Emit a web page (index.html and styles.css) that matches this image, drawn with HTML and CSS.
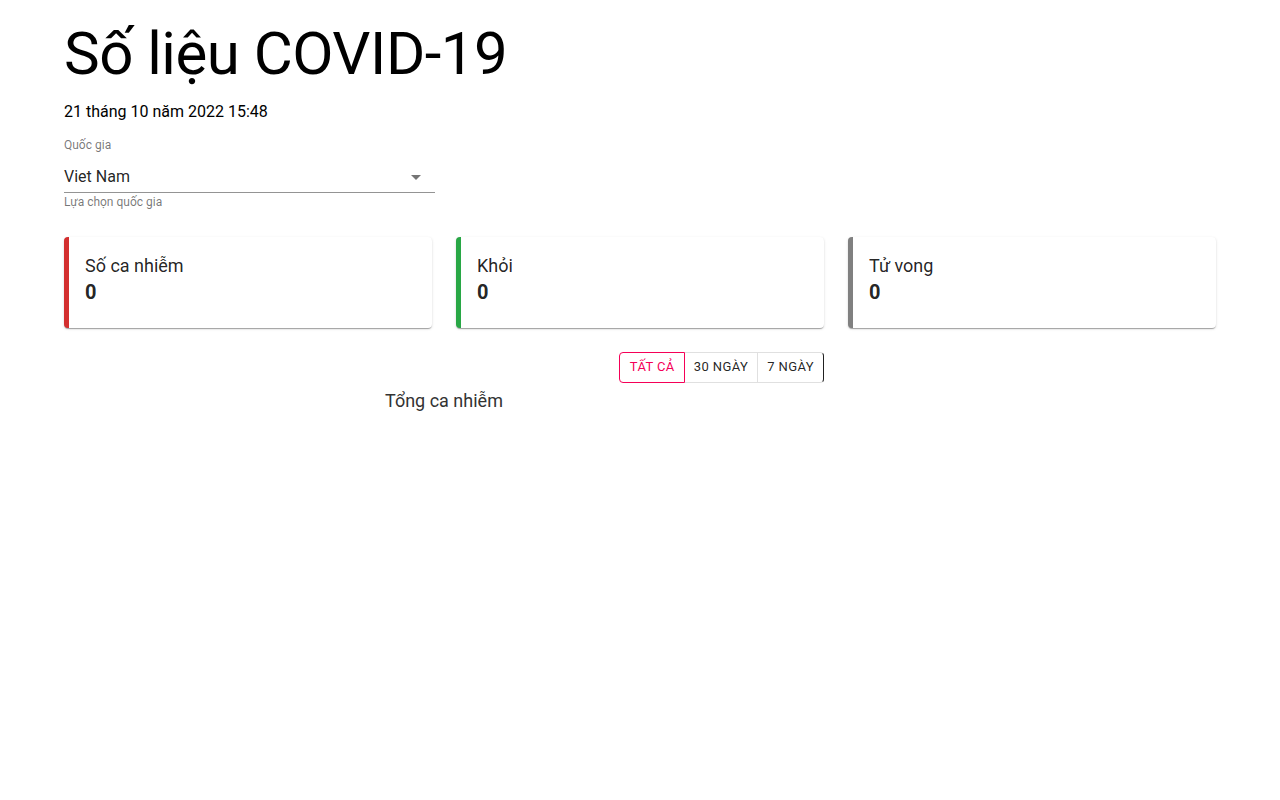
FILE: index.html
```html
<!DOCTYPE html>
<html lang="vi">
<head>
<meta charset="utf-8">
<title>Số liệu COVID-19</title>
<link rel="stylesheet" href="styles.css">
</head>
<body>
<main class="page">
  <h1 class="title">Số liệu COVID-19</h1>
  <p class="date">21 tháng 10 năm 2022 15:48</p>

  <div class="field">
    <label class="field-label">Quốc gia</label>
    <div class="select">
      <span class="select-value">Viet Nam</span>
      <svg class="select-arrow" width="24" height="24" viewBox="0 0 24 24"><path d="M7 10l5 5 5-5z" fill="rgba(0,0,0,0.54)"/></svg>
    </div>
    <div class="field-helper">Lựa chọn quốc gia</div>
  </div>

  <section class="cards">
    <div class="card card-red">
      <div class="card-title">Số ca nhiễm</div>
      <div class="card-value">0</div>
    </div>
    <div class="card card-green">
      <div class="card-title">Khỏi</div>
      <div class="card-value">0</div>
    </div>
    <div class="card card-gray">
      <div class="card-title">Tử vong</div>
      <div class="card-value">0</div>
    </div>
  </section>

  <section class="chart">
    <div class="toggle-row">
      <div class="toggle-group">
        <button class="toggle selected">Tất cả</button>
        <button class="toggle">30 ngày</button>
        <button class="toggle last">7 ngày</button>
      </div>
    </div>
    <div class="chart-title">Tổng ca nhiễm</div>
  </section>
</main>
</body>
</html>
```

FILE: styles.css
```css
* { box-sizing: border-box; }
html, body { margin: 0; padding: 0; background: #fff; }
body {
  font-family: Roboto, "Noto Sans", "Liberation Sans", sans-serif;
  color: rgba(0,0,0,0.87);
}
.page {
  width: 1152px;
  margin: 0 64px;
  padding-top: 18px;
}
.title {
  margin: 0;
  font-size: 60px;
  line-height: 72px;
  font-weight: 400;
  letter-spacing: -0.5px;
  color: #000;
}
.date {
  margin: 10px 0 0;
  font-size: 16px;
  line-height: 24px;
  color: #000;
}
.field {
  width: 371px;
  margin-top: 13px;
}
.field-label {
  display: block;
  font-size: 12px;
  line-height: 16px;
  color: rgba(0,0,0,0.54);
}
.select {
  display: flex;
  align-items: center;
  justify-content: space-between;
  margin-top: 12px;
  height: 28px;
  padding-bottom: 4px;
  border-bottom: 1px solid rgba(0,0,0,0.42);
}
.select-value {
  font-size: 16px;
  line-height: 23px;
  color: rgba(0,0,0,0.87);
}
.select-arrow { margin-right: 7px; }
.field-helper {
  margin-top: 1px;
  font-size: 12px;
  line-height: 16px;
  color: rgba(0,0,0,0.54);
}
.cards {
  display: grid;
  grid-template-columns: repeat(3, 1fr);
  gap: 24px;
  margin-top: 27px;
}
.card {
  background: #fff;
  border-radius: 4px;
  border-left: 5px solid #d32f2f;
  box-shadow: 0 2px 1px -1px rgba(0,0,0,0.2), 0 1px 1px 0 rgba(0,0,0,0.14), 0 1px 3px 0 rgba(0,0,0,0.12);
  padding: 16px 16px 23px;
}
.card-red { border-left-color: #d32f2f; }
.card-green { border-left-color: #28a745; }
.card-gray { border-left-color: #808080; }
.card-title {
  font-size: 18px;
  line-height: 26px;
}
.card-value {
  font-size: 20px;
  line-height: 26px;
  font-weight: 700;
}
.chart {
  width: 760px;
  margin-top: 24px;
}
.toggle-row {
  display: flex;
  justify-content: flex-end;
}
.toggle-group {
  display: flex;
}
.toggle {
  font-family: inherit;
  font-size: 13px;
  line-height: 22px;
  letter-spacing: 0.4px;
  text-transform: uppercase;
  font-weight: 400;
  color: rgba(0,0,0,0.87);
  background: #fff;
  border: 1px solid rgba(0,0,0,0.12);
  border-left-width: 0;
  padding: 3px 9px 5px;
  height: 31px;
  margin: 0;
}
.toggle:first-child {
  border-left-width: 1px;
  border-radius: 4px 0 0 4px;
  padding-left: 10px;
}
.toggle.selected {
  color: #f50057;
  border-color: #f50057;
}
.toggle.last {
  border-radius: 0 4px 4px 0;
  border-right-color: rgba(0,0,0,0.87);
}
.chart-title {
  text-align: center;
  font-size: 18px;
  line-height: 24px;
  margin-top: 6px;
  color: #333;
}
```
